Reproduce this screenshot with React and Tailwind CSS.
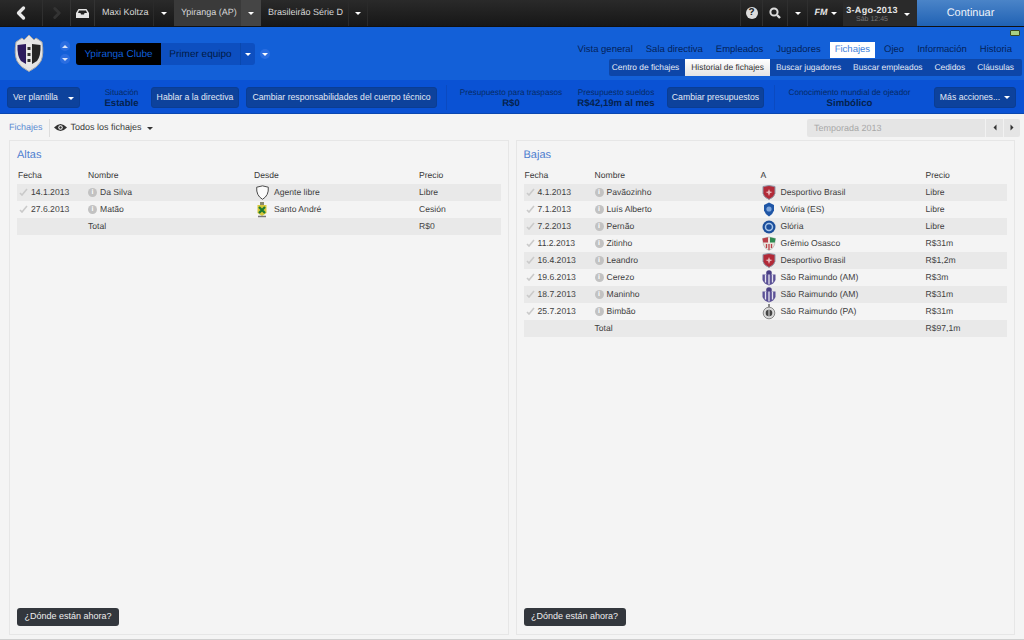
import { ChevronLeft, ChevronRight } from 'lucide-react';

const altas = [
    { date: '14.1.2013', name: 'Da Silva', club: 'Agente libre', price: 'Libre', crest: 'free' },
    { date: '27.6.2013', name: 'Matão', club: 'Santo André', price: 'Cesión', crest: 'santo' },
];

const bajas = [
    { date: '4.1.2013', name: 'Pavãozinho', club: 'Desportivo Brasil', price: 'Libre', crest: 'desportivo' },
    { date: '7.1.2013', name: 'Luís Alberto', club: 'Vitória (ES)', price: 'Libre', crest: 'vitoria' },
    { date: '7.2.2013', name: 'Pernão', club: 'Glória', price: 'Libre', crest: 'gloria' },
    { date: '11.2.2013', name: 'Zitinho', club: 'Grêmio Osasco', price: 'R$31m', crest: 'gremio' },
    { date: '16.4.2013', name: 'Leandro', club: 'Desportivo Brasil', price: 'R$1,2m', crest: 'desportivo' },
    { date: '19.6.2013', name: 'Cerezo', club: 'São Raimundo (AM)', price: 'R$3m', crest: 'raimundo' },
    { date: '18.7.2013', name: 'Maninho', club: 'São Raimundo (AM)', price: 'R$31m', crest: 'raimundo' },
    { date: '25.7.2013', name: 'Bimbão', club: 'São Raimundo (PA)', price: 'R$31m', crest: 'para' },
];

const mainTabs = ['Vista general', 'Sala directiva', 'Empleados', 'Jugadores', 'Fichajes', 'Ojeo', 'Información', 'Historia'];
const subTabs = ['Centro de fichajes', 'Historial de fichajes', 'Buscar jugadores', 'Buscar empleados', 'Cedidos', 'Cláusulas'];

function Caret({ className = 'border-t-white' }) {
    return <span className={`inline-block w-0 h-0 border-x-[3px] border-x-transparent border-t-[3px] ${className}`} />;
}

function Crest({ type }) {
    if (type === 'free') {
        return (
            <svg width="13" height="15" viewBox="0 0 13 15">
                <path d="M.7 2.200Q6.500-.5 12.300 2.200 13 10.500 6.500 14.300 0 10.500.7 2.200Z" fill="#fbfbfb" stroke="#4a4a4a" strokeWidth="1" />
            </svg>
        );
    }
    if (type === 'santo') {
        return (
            <svg width="14" height="16" viewBox="0 0 14 16">
                <rect x="5" y="0" width="4" height="3" fill="#8a8a70" />
                <path d="M2.500 3h9v8l-4.500 3-4.500-3z" fill="#d8c93a" />
                <path d="M4 5l6 6M10 5l-6 6" stroke="#1d7a33" strokeWidth="2.200" />
                <path d="M3 14.500h8" stroke="#777" strokeWidth="1.500" />
            </svg>
        );
    }
    if (type === 'desportivo') {
        return (
            <svg width="14" height="15" viewBox="0 0 14 15">
                <path d="M1 1.500 7 .5l6 1v7Q12.500 12 7 14.500 1.500 12 1 8.500z" fill="#b22a38" stroke="#8f98a8" strokeWidth="1" />
                <path d="M7 4 8 6.500 10.500 7 8 8.200 7 11 6 8.200 3.500 7 6 6.500z" fill="#e8b9bd" />
            </svg>
        );
    }
    if (type === 'vitoria') {
        return (
            <svg width="14" height="15" viewBox="0 0 14 15">
                <path d="M7 .5 12 3v5.500Q11 12 7 14.500 3 12 2 8.500V3z" fill="#1f56a6" />
                <circle cx="7" cy="7" r="2.600" fill="#7ea6dc" />
            </svg>
        );
    }
    if (type === 'gloria') {
        return (
            <svg width="14" height="14" viewBox="0 0 14 14">
                <circle cx="7" cy="7" r="6.500" fill="#1c4f9c" />
                <circle cx="7" cy="7" r="3.500" fill="none" stroke="#a9c6ea" strokeWidth="1.500" />
            </svg>
        );
    }
    if (type === 'gremio') {
        return (
            <svg width="14" height="15" viewBox="0 0 14 15">
                <path d="M.5 2.500 7 1l6.500 1.500-1 6.500Q11 13 7 14.500 3 13 1.500 9z" fill="#e9e4dc" stroke="#9a9a9a" strokeWidth=".5" />
                <path d="M.5 2.500 6 1.300V6.500H1.200z" fill="#b8404a" />
                <path d="M8 1.300 13.500 2.500l-.7 4H8z" fill="#2f8a50" />
                <path d="M4.500 8v4M7 8v6M9.500 8v4" stroke="#b8404a" strokeWidth="1.300" />
            </svg>
        );
    }
    if (type === 'raimundo') {
        return (
            <svg width="14" height="16" viewBox="0 0 14 16">
                <circle cx="7" cy="3" r="2.800" fill="#4a3f85" />
                <path d="M.5 4.500h13V10Q12 14 7 15.500 2 14 .5 10z" fill="#5b5196" />
                <path d="M3.500 4.500v8M7 4.500v10M10.500 4.500v8" stroke="#e6e4ef" strokeWidth="1.300" />
            </svg>
        );
    }
    return (
        <svg width="14" height="16" viewBox="0 0 14 16">
            <path d="M7 0v3" stroke="#666" strokeWidth="1.500" />
            <circle cx="7" cy="9" r="5.800" fill="#d8d8d8" stroke="#888" />
            <circle cx="7" cy="9" r="3.300" fill="#444" />
            <path d="M7 6v6" stroke="#ddd" />
        </svg>
    );
}

function Tick() {
    return (
        <svg width="9" height="8" viewBox="0 0 9 8" className="shrink-0">
            <path d="M1 5l2 2 5-6" fill="none" stroke="#cacaca" strokeWidth="1.600" />
        </svg>
    );
}

function InfoDot() {
    return (
        <span className="w-[9px] h-[9px] shrink-0 rounded-full bg-[#c2c2c2] text-white text-[7px] leading-[9px] text-center font-bold">i</span>
    );
}

function ActionButton({ children, className = '' }) {
    return (
        <button className={`h-[21px] rounded-[3px] bg-[#0d429c] border border-[#0a3d94] text-[#e3e9f5] text-[8.7px] flex items-center justify-center whitespace-nowrap ${className}`}>
            {children}
        </button>
    );
}

function Stat({ label, value, className = '' }) {
    return (
        <div className={`flex flex-col items-center mt-[2px] text-[#062a66] whitespace-nowrap ${className}`}>
            <span className="text-[8.2px] leading-[11px]">{label}</span>
            <span className="text-[9.6px] leading-[12px] font-bold text-[#05224f]">{value}</span>
        </div>
    );
}

function Panel({ title, destLabel, rows, total }) {
    return (
        <section className="flex-1 border border-[#e6e6e6] bg-[#f4f4f4] px-[7px] flex flex-col">
            <h2 className="text-[11px] leading-[14px] text-[#4f7fd0] mt-[7px]">{title}</h2>
            <div className="mt-[5px] grid grid-cols-[70px_166px_165px_1fr] h-[17px] items-center pl-px text-[8.6px] text-[#3a3a3a]">
                <span>Fecha</span>
                <span>Nombre</span>
                <span>{destLabel}</span>
                <span>Precio</span>
            </div>
            {rows.map((row) => (
                <div key={row.date} className="grid grid-cols-[70px_166px_165px_1fr] h-[17px] items-center pl-px text-[8.6px] text-[#3f3f3f] odd:bg-[#e9e9e9]">
                    <span className="flex items-center gap-[3px] pl-px"><Tick />{row.date}</span>
                    <span className="flex items-center gap-[3px]"><InfoDot />{row.name}</span>
                    <span className="flex items-center">
                        <span className="w-[16px] flex justify-center"><Crest type={row.crest} /></span>
                        <span className="ml-[4px]">{row.club}</span>
                    </span>
                    <span>{row.price}</span>
                </div>
            ))}
            <div className={`grid grid-cols-[70px_166px_165px_1fr] h-[17px] items-center pl-px text-[8.6px] text-[#3f3f3f] ${rows.length % 2 === 0 ? 'bg-[#e9e9e9]' : ''}`}>
                <span />
                <span>Total</span>
                <span />
                <span>{total}</span>
            </div>
            <button className="mt-auto mb-[8px] w-[102px] h-[18px] rounded-[3px] bg-[#33373d] text-[#eeeeee] text-[9px]">¿Dónde están ahora?</button>
        </section>
    );
}

export default function App() {
    return (
        <div className="w-[1024px] h-[640px] overflow-hidden flex flex-col bg-[#f4f4f4] border-b border-[#cfcfcf] [text-rendering:geometricPrecision] font-['Liberation_Sans',Arial,sans-serif]">
            {/* top bar */}
            <header className="h-[27px] shrink-0 flex items-stretch bg-gradient-to-b from-[#2a2a2a] to-[#171717] text-[9px] text-[#d8d8d8] border-b border-[#111]">
                <div className="w-[43px] flex items-center justify-center border-r border-[#2f2f2f]">
                    <ChevronLeft size={20} strokeWidth={4} color="#e8e8e8" />
                </div>
                <div className="w-[28px] flex items-center justify-center border-r border-[#333]">
                    <ChevronRight size={18} strokeWidth={4} color="#333" />
                </div>
                <div className="w-[24px] flex items-center justify-center border-r border-[#333]">
                    <svg width="13" height="9" viewBox="0 0 13 9"><path d="M2.500 0h8L13 4v5H0V4zM3 1.500 2 4h2.500l.5 1.500h3L8.500 4H11l-1-2.500z" fill="#e3e3e3" /></svg>
                </div>
                <div className="w-[59px] flex items-center pl-[7px] whitespace-nowrap border-r border-[#2a2a2a]">Maxi Koltza</div>
                <div className="w-[20px] flex items-center justify-center"><Caret /></div>
                <div className="w-[67px] flex items-center pl-[7px] whitespace-nowrap bg-[#3a3a3a]">Ypiranga (AP)</div>
                <div className="w-[20px] flex items-center justify-center bg-[#454545]"><Caret /></div>
                <div className="w-[88px] flex items-center pl-[7px] whitespace-nowrap border-r border-[#2a2a2a]">Brasileirão Série D</div>
                <div className="w-[19px] flex items-center justify-center border-r border-[#2a2a2a]"><Caret /></div>
                <div className="flex-1" />
                <div className="w-[22px] flex items-center justify-center border-l border-[#2f2f2f]">
                    <span className="w-[12px] h-[12px] rounded-full bg-[#dddddd] text-[#222] text-[10px] leading-[12px] font-bold text-center">?</span>
                </div>
                <div className="w-[25px] flex items-center justify-center border-l border-[#2f2f2f]">
                    <svg width="12" height="12" viewBox="0 0 12 12"><circle cx="5" cy="5" r="3.600" fill="none" stroke="#dddddd" strokeWidth="2" /><path d="M8 8l3 3" stroke="#dddddd" strokeWidth="2.400" /></svg>
                </div>
                <div className="w-[20px] flex items-center justify-center border-l border-[#2f2f2f]"><Caret /></div>
                <div className="w-[36px] flex items-center justify-center gap-[3px] border-l border-[#2f2f2f]">
                    <span className="text-[9px] font-bold italic text-[#e5e5e5]">FM</span>
                    <Caret />
                </div>
                <div className="w-[74px] flex items-center bg-[#2a2a2a] pt-[2px]">
                    <div className="w-[54px] ml-[2px] flex flex-col items-center">
                        <span className="text-[9px] leading-[11px] font-semibold tracking-[0.3px] text-[#e8e8e8]">3-Ago-2013</span>
                        <span className="text-[7px] leading-[8px] text-[#777]">Sáb 12:45</span>
                    </div>
                    <span className="ml-[5px]"><Caret /></span>
                </div>
                <div className="w-[107px] flex items-center justify-center bg-gradient-to-b from-[#4a84c8] to-[#1f62b4] text-[11px] text-[#eef3fa]">Continuar</div>
            </header>

            {/* club header */}
            <div className="h-[53px] shrink-0 flex bg-[#1360d8]">
                <div className="w-[56px] flex items-center justify-center pl-px">
                    <svg width="30" height="37" viewBox="0 0 30 37">
                        <path d="M2 7 8 3l2 2 5-5 5 5 2-2 6 4q2 12-1 19-3 6-12 10.500Q6 32 3 26 0 19 2 7z" fill="#e4e4e4" stroke="#a9a9a9" />
                        <path d="M3.500 10 12 9v20l-5-3q-4-5-3.500-16z" fill="#2c1a5e" />
                        <path d="M18 9l8.500 1q.5 11-3.500 16l-5 3z" fill="#252525" />
                        <path d="M12.500 7h5v25h-5z" fill="#e8e8e8" />
                        <path d="M13.500 12h3v3h-3zM13.500 18h3v3h-3zM13.500 24h3v3h-3z" fill="#333" />
                    </svg>
                </div>
                <div className="w-[17px] flex flex-col items-center gap-[3px] mt-[14px]">
                    <span className="w-[10px] h-[10px] rounded-full bg-[#2a6de0] flex items-center justify-center"><Caret className="rotate-180 border-t-[#dbe6fa]" /></span>
                    <span className="w-[10px] h-[10px] rounded-full bg-[#2a6de0] flex items-center justify-center"><Caret className="border-t-[#dbe6fa]" /></span>
                </div>
                <div className="ml-[3px] mt-[16px] h-[22px] flex items-stretch rounded-[3px] overflow-hidden bg-[#0d4fc0] text-[10px]">
                    <div className="w-[85px] bg-black text-[#0f5ed8] flex items-center justify-center whitespace-nowrap">Ypiranga Clube</div>
                    <div className="w-[79px] text-[#021a45] flex items-center justify-center whitespace-nowrap">Primer equipo</div>
                    <div className="w-[15px] flex items-center justify-center border-l border-[#0a48ae]"><Caret /></div>
                </div>
                <span className="ml-[5px] mt-[22px] w-[10px] h-[10px] rounded-full bg-[#2a6de0] flex items-center justify-center"><Caret /></span>
                <div className="flex-1 flex flex-col items-end relative">
                    <span className="absolute right-[4px] top-[3px] w-[10px] h-[6px] rounded-[1px] bg-[#a8cf82] border border-[#38471f]" />
                    <nav className="mt-[15px] h-[16px] flex items-center gap-[13px] pr-[12px] text-[9.5px] text-[#04235a] whitespace-nowrap">
                        {mainTabs.map((tab) => (
                            <span key={tab} className={tab === 'Fichajes' ? 'bg-white text-[#3f7fdc] px-[5px] -mx-[4px] h-[16px] leading-[16px]' : ''}>{tab}</span>
                        ))}
                    </nav>
                    <nav className="mt-[1px] mr-[2px] h-[17px] w-[413px] flex items-center justify-end gap-[12px] bg-[#0d46a8] rounded-[2px] pr-[8px] text-[8.4px] text-[#e3e9f5] whitespace-nowrap">
                        {subTabs.map((tab) => (
                            <span key={tab} className={tab === 'Historial de fichajes' ? 'bg-gradient-to-b from-white to-[#e4e4e4] text-[#333] px-[6px] -mx-[6px] h-[17px] leading-[17px]' : ''}>{tab}</span>
                        ))}
                    </nav>
                </div>
            </div>

            {/* action bar */}
            <div className="h-[34px] shrink-0 flex items-center pt-[2px] bg-[#0a52d4] border-b border-[#0a47b0]">
                <ActionButton className="ml-[7px] w-[73px] !justify-start pl-[5px]">
                    <span className="w-[48px] text-left">Ver plantilla</span>
                    <span className="ml-[7px]"><Caret /></span>
                </ActionButton>
                <Stat label="Situación" value="Estable" className="ml-[12px] w-[59px]" />
                <ActionButton className="w-[88px]">Hablar a la directiva</ActionButton>
                <ActionButton className="ml-[7px] w-[191px]">Cambiar responsabilidades del cuerpo técnico</ActionButton>
                <div className="ml-[9px] w-px h-[25px] bg-[#0b4ac0]" />
                <Stat label="Presupuesto para traspasos" value="R$0" className="w-[128px]" />
                <Stat label="Presupuesto sueldos" value="R$42,19m al mes" className="w-[82px]" />
                <ActionButton className="ml-[10px] w-[97px]">Cambiar presupuestos</ActionButton>
                <div className="ml-[10px] w-px h-[25px] bg-[#0b4ac0]" />
                <Stat label="Conocimiento mundial de ojeador" value="Simbólico" className="w-[149px]" />
                <ActionButton className="ml-[10px] w-[82px] gap-[4px]">Más acciones... <Caret /></ActionButton>
            </div>

            {/* filter row */}
            <div className="h-[26px] shrink-0 flex items-center pt-[1px] text-[9px]">
                <span className="ml-[9px] text-[#5b8bd2]">Fichajes</span>
                <span className="ml-[6px] w-px h-[18px] bg-[#dddddd]" />
                <svg width="13" height="9" viewBox="0 0 13 9" className="ml-[4px]">
                    <path d="M0 4.500Q6.500-2.500 13 4.500 6.500 11.500 0 4.500z" fill="#333" />
                    <circle cx="6.500" cy="4.500" r="2.200" fill="#fff" />
                    <circle cx="6.500" cy="4.500" r="1.200" fill="#333" />
                </svg>
                <span className="ml-[4px] text-[#3a3a3a] font-medium">Todos los fichajes</span>
                <span className="ml-[5px]"><Caret className="border-t-[#333]" /></span>
                <div className="ml-auto mr-[4px] w-[213px] h-[18px] flex items-stretch rounded-[2px] bg-[#e5e5e5] text-[#a8a8a8]">
                    <span className="w-[178px] pl-[7px] leading-[18px]">Temporada 2013</span>
                    <span className="w-[18px] flex items-center justify-center border-l border-[#f2f2f2]"><Caret className="rotate-90 border-t-[#333]" /></span>
                    <span className="w-[17px] flex items-center justify-center border-l border-[#f2f2f2]"><Caret className="-rotate-90 border-t-[#333]" /></span>
                </div>
            </div>

            {/* panels */}
            <main className="flex-1 flex gap-[7px] px-[9px] pb-[4px] min-h-0">
                <Panel title="Altas" destLabel="Desde" rows={altas} total="R$0" />
                <Panel title="Bajas" destLabel="A" rows={bajas} total="R$97,1m" />
            </main>
        </div>
    );
}
